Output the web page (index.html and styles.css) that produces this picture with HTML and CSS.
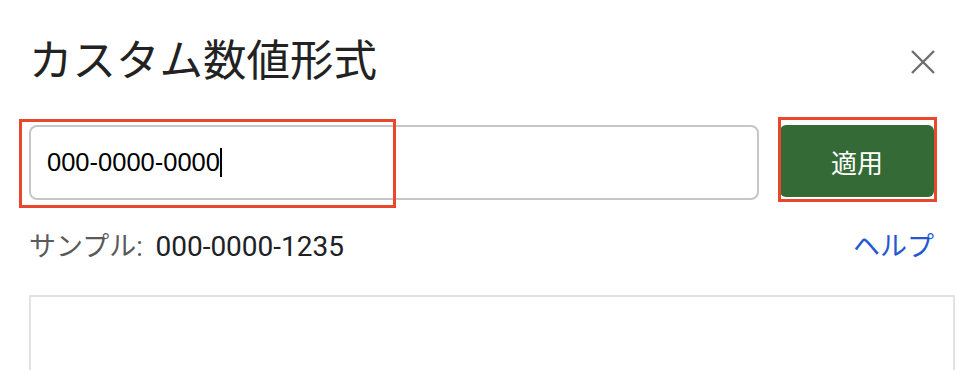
FILE: index.html
```html
<!DOCTYPE html>
<html lang="ja">
<head>
  <meta charset="UTF-8" />
  <title>カスタム数値形式</title>
  <link rel="stylesheet" href="styles.css">
</head>
<body>

  <div class="dialog">
    <div class="dialog-header">
      <h2 class="dialog-title">カスタム数値形式</h2>
      <button class="close-btn" aria-label="閉じる">
        <svg width="24" height="24" viewBox="0 0 24 24">
          <path d="M1 1 L23 23 M23 1 L1 23" stroke="#6e6e6e" stroke-width="2.4" fill="none" />
        </svg>
      </button>
    </div>

    <div class="format-row">
      <div class="format-field">
        <span class="format-value">000-0000-0000</span><span class="caret"></span>
      </div>
      <button class="apply-btn">適用</button>

      <!-- 注釈の赤枠 -->
      <div class="mark mark-field"></div>
      <div class="mark mark-btn"></div>
    </div>

    <div class="sample-row">
      <div class="sample">
        <span class="sample-label">サンプル:</span>
        <span class="sample-value">000-0000-1235</span>
      </div>
      <a class="help-link" href="#">ヘルプ</a>
    </div>

    <div class="format-list"></div>
  </div>

</body>
</html>
```

FILE: styles.css
```css
body {
  font-family: Roboto, "Noto Sans CJK JP", sans-serif;
  background: #fff;
  margin: 0;
  padding: 0;
  overflow: hidden;
}
.dialog {
  padding: 37px 19px 0 29px;
}
.dialog-header {
  display: flex;
  justify-content: space-between;
  align-items: center;
  margin-right: 20px;
}
.dialog-title {
  margin: 0;
  font-size: 43.5px;
  line-height: 50px;
  font-weight: 400;
  color: #222;
}
.close-btn {
  border: none;
  background: none;
  padding: 0;
  width: 24px;
  height: 24px;
  cursor: pointer;
}
.close-btn svg {
  display: block;
}
.format-row {
  position: relative;
  display: flex;
  align-items: flex-start;
  gap: 21px;
  margin-top: 38px;
  margin-right: 21px;
}
.format-field {
  flex: 1;
  height: 75px;
  box-sizing: border-box;
  border: 2px solid #c6c6c6;
  border-radius: 8px;
  padding-left: 16px;
  display: flex;
  align-items: center;
}
.format-value {
  font-family: "Liberation Sans", Arial, sans-serif;
  font-size: 25.5px;
  color: #000;
}
.caret {
  display: inline-block;
  width: 2px;
  height: 29px;
  background: #000;
}
.apply-btn {
  width: 154px;
  height: 72px;
  border: none;
  border-radius: 6px;
  background: #346a35;
  color: #fff;
  font-family: inherit;
  font-size: 26px;
  cursor: pointer;
}
.mark {
  position: absolute;
  box-sizing: border-box;
  border: 3px solid #e9472b;
}
.mark-field {
  left: -10px;
  top: -6px;
  width: 377px;
  height: 89px;
}
.mark-btn {
  left: 749px;
  top: -8px;
  width: 159px;
  height: 85px;
}
.sample-row {
  display: flex;
  justify-content: space-between;
  align-items: baseline;
  margin-top: 31px;
  margin-right: 21px;
  font-size: 27px;
  line-height: 32px;
}
.sample-label {
  color: #5a5a5a;
  margin-right: 6px;
}
.sample-value {
  color: #202124;
  font-size: 28px;
}
.help-link {
  color: #2458d0;
  text-decoration: none;
}
.format-list {
  margin-top: 32px;
  height: 80px;
  border: 2px solid #e2e2e2;
  border-bottom: none;
}
```
